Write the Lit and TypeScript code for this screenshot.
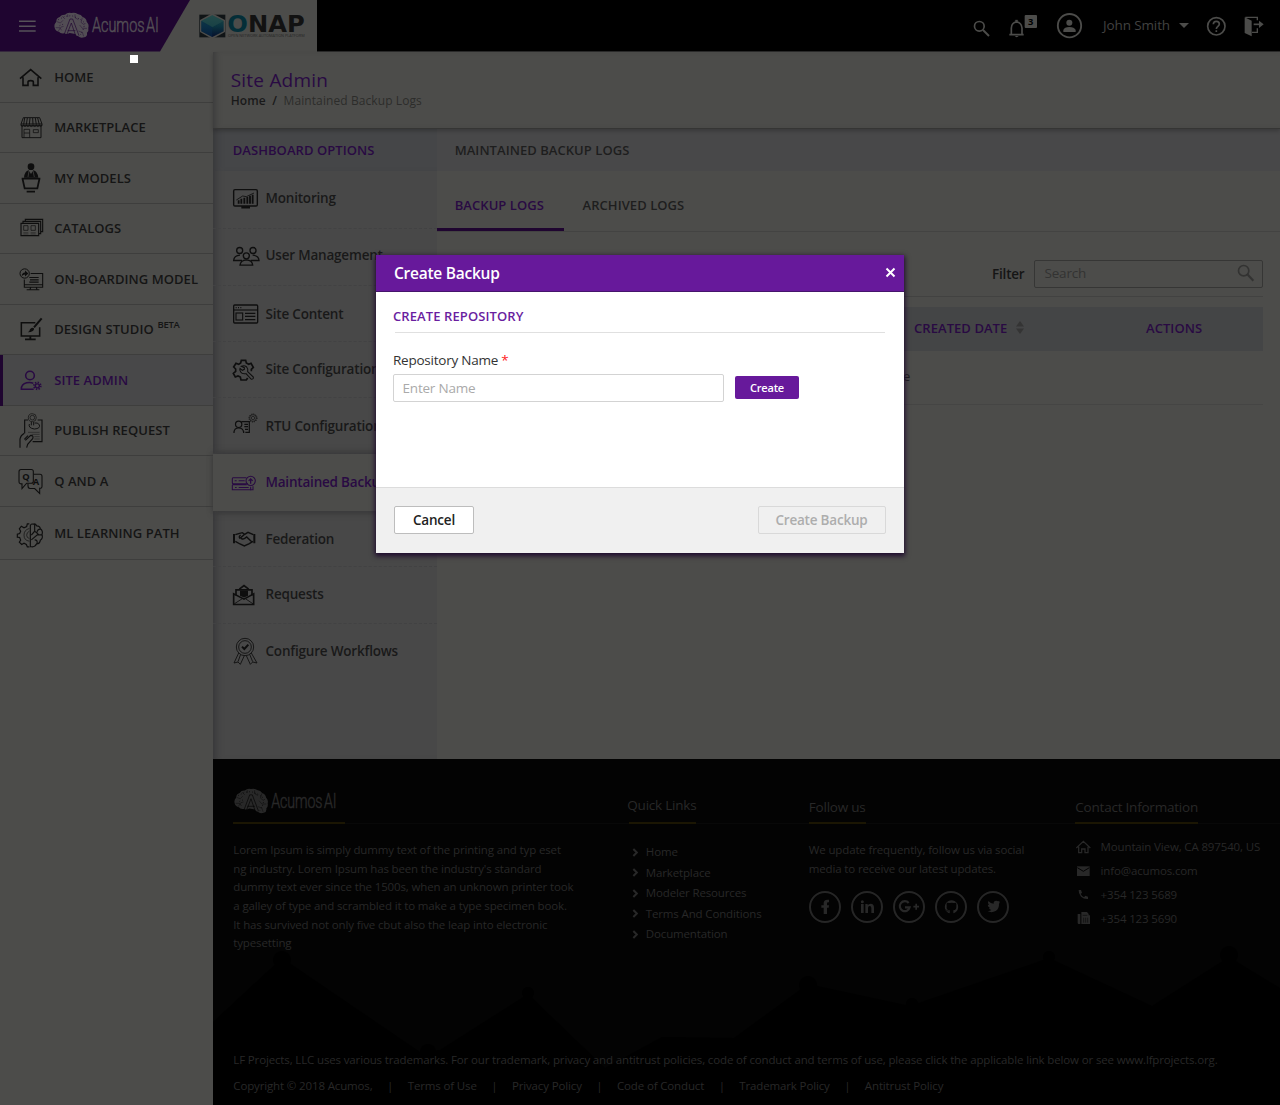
import { LitElement, html, svg, css, nothing } from "lit";
import { customElement, property } from "lit/decorators.js";

const gear = (cx: number, cy: number, r: number, w = 3) => svg`
  <circle cx=${cx} cy=${cy} r=${r} stroke-width=${w}></circle>
  <circle cx=${cx} cy=${cy} r=${r + w} stroke-width=${w * 1.3} pathLength="16" stroke-dasharray="1 1"></circle>`;

const house = svg`<path d="M60 86 92 59 124 86M69 82V106H84V96Q84 92 92 92T100 96V106H114V82" stroke-width="4.800"/>`;

/* Icons are drawn on a grid of three units per pixel: [viewBox, content]. */
const icons: Record<string, [string, unknown]> = {
  home: ["45 30 90 108", house],
  market: ["45 180 90 108", svg`<g stroke-width="2.800"><path d="M70 203H119L126 222V227H63V222ZM66 229V263H123V229M63 222H126M74 204 71 224M82 204 79 224M90 204 88 224M98 204 99 224M106 204 109 224M113 204 118 224"/>
    <path d="M63 227Q67 232 71 227 75 232 79 227 84 232 88 227 94 232 99 227 104 232 109 227 113 232 118 227 122 232 126 227"/>
    <path d="M72 262V238H89V262M72 249H89M100 239H115V248H100Z" opacity=".8"/></g>`],
  models: ["45 331 90 108", svg`<circle cx="93" cy="348" r="10" fill="currentColor" stroke="none"/>
    <path d="M72 381Q74 361 86 359L93 370 100 359Q112 361 115 381Z" fill="currentColor" stroke="none"/>
    <path d="M87 361 84 379M99 361 103 379" stroke="#4c4c4a" stroke-width="2"/>
    <path d="M65 384H121M68 386 74 413H112L118 386M80 423H105" stroke-width="5.400"/>`],
  catalogs: ["45 483 90 108", svg`<g stroke-width="3.400"><path d="M63 520H116V557H63ZM69 519V514H122V551H117M76 513V508H128V545H123"/>
    <path d="M71 527H84V541H71ZM93 527H106V541H93Z" stroke-width="2.6" opacity=".8"/><path d="M70 548H85M92 548H107M70 552H85M92 552H107" stroke-width="1.6" opacity=".7"/></g>`],
  onboard: ["45 634.5 90 108", svg`<circle cx="74" cy="669" r="14" stroke-width="3"/><path d="M65 677Q66 666 75 666V660L85 669 75 678V672Q69 672 65 677Z" fill="currentColor" stroke="none"/>
    <path d="M92 669H128V710H73V687M73 703H128M92 711 90 717M109 711 111 717M80 718H118" stroke-width="3.200"/><path d="M88 681H116M90 688H116M88 695H116" stroke-width="3.400"/>`],
  design: ["45 36 90 108", svg`<path d="M106 68H64V108H119V82" stroke-width="4.600"/><path d="M125 55 102 82" stroke-width="6"/><path d="M83 97Q89 95 90 88 95 80 102 85 104 96 83 97Z" fill="currentColor" stroke="none"/><path d="M91 109V118M75 118H107" stroke-width="5.500"/>`],
  admin: ["45 187.5 90 108", svg`<circle cx="90" cy="225" r="13" stroke-width="4.6"/><path d="M100 248Q90 245 80 247 64 251 64 266H101" stroke-width="4.6"/>${gear(112, 256, 6, 4.2)}`],
  publish: ["45 339 90 108", svg`<g stroke-width="3.400"><path d="M74 400V360H84M113 360H126V425H98"/><circle cx="97" cy="353" r="12" stroke-width="2"/><circle cx="97" cy="353" r="7" stroke-width="2"/>
    <path d="M94 366V376M101 366V376M88 372Q84 384 103 387 122 386 118 374 112 367 104 369" stroke-width="2.8"/><path d="M84 397H119M95 403H119M103 410H119M103 417H119" stroke-width="1.8" opacity=".7"/>
    <path d="M60 443V417Q62 406 73 400M80 443 83 433 98 416Q102 406 92 406L76 421M84 407 73 418"/></g>`],
  qa: ["45 490.5 90 108", svg`<g stroke-width="3.200"><path d="M63 507H94Q100 507 100 513V542Q100 548 94 548H80L66 564V550Q57 551 57 543V514Q57 507 63 507Z"/><path d="M101 521H120Q126 521 126 527V557Q126 564 119 563V579L104 564H90Q84 564 84 556V550"/></g>
    <text x="67" y="538" font-size="28" font-weight="700">Q<tspan x="98" y="554">A</tspan></text>`],
  ml: ["45 646.5 90 108", svg`<g stroke-width="3.500"><path d="M88 670H82L80 678 72 682 64 677 58 685 62 692 59 699 52 701V710L59 711 62 719 58 725 65 732 72 728 79 732 82 739H88"/><path d="M88 684Q72 688 72 704T88 722" stroke-width="2"/><path d="M88 692Q80 696 80 704T88 714" stroke-width="2"/>
    <path d="M91 740V675Q93 669 99 671 106 668 110 676 120 676 121 685 130 692 126 702 130 714 121 719 120 730 110 730 104 742 91 738M104 672V692L94 704M104 692 118 704M121 686Q112 686 111 696M126 703H112L94 718M111 730Q114 718 104 718"/></g>`],
  monitor: ["57 375 90 90", svg`<rect x="65" y="389" width="71" height="49" rx="4" stroke-width="4.200"/><path d="M88 442H114" stroke-width="7"/><path d="M80 431V421M88 431V416M97 431V413M106 431V411M114 431V407M122 431V404" stroke-width="5.500"/><path d="M73 420 92 408 103 410 126 399" stroke-width="2.600"/>`],
  users: ["57 547.5 90 90", svg`<g stroke-width="4"><circle cx="83" cy="573" r="9"/><circle cx="123" cy="573" r="9"/><circle cx="103" cy="589" r="9"/><path d="M90 603H65Q66 588 84 587M116 603H141Q140 588 122 587M84 617H122Q121 602 103 601 86 602 84 617Z"/></g>`],
  content: ["57 717 90 90", svg`<rect x="65" y="735" width="72" height="54" rx="3" stroke-width="4"/><path d="M65 750H137" stroke-width="3.400"/><path d="M71 743H74M78 743H81M85 743H88" stroke-width="3.400"/><rect x="72" y="759" width="20" height="21" stroke-width="3.400"/><path d="M99 760H130M99 769H130M99 779H130" stroke-width="4"/>`],
  config: ["57 105 90 90", svg`<path d="M107 174 103 180H87L85 171 78 168 70 171 64 160 71 154V147L65 141 72 130 80 133 86 129 88 121H101L103 129 110 133 117 130 124 142 118 148V154" stroke-width="5"/>
    <path d="M88 139Q97 135 104 141 110 148 107 155L124 171Q125 178 118 178L102 161Q90 163 86 156 82 150 84 145L91 151 97 148 97 143Z" stroke-width="3.200"/>`],
  rtu: ["57 273 90 90", svg`<g stroke-width="3.600"><circle cx="80" cy="313" r="9.5"/><path d="M66 338Q66 324 80 324T95 338M66 334V339M95 334V339"/><path d="M88 305H112V337H100M97 313H108M97 320H108M99 328H108"/></g><circle cx="123" cy="294" r="12" stroke-width="3" pathLength="24" stroke-dasharray="1 1"/><circle cx="123" cy="294" r="10" stroke-width="1.800"/><circle cx="123" cy="294" r="5" stroke-width="1.8"/>`],
  backup: ["57 442.5 90 90", svg`<g stroke-width="3.2"><path d="M103 472H63Q61 472 61 475V487Q61 490 64 490H108M64 491Q61 492 61 495V508H123V497M61 493H104M68 481H74M80 481H98M69 501H74M80 501H110"/><circle cx="116" cy="481" r="14"/><path d="M116 499V509"/></g><path d="M116 490V475M110 481 116 475 122 481" stroke-width="3.8"/>`],
  federation: ["57 612 90 90", svg`<g stroke-width="4.200"><path d="M66 642V670M127 642V670" stroke-width="6"/><path d="M70 644 83 640 91 638 98 643M124 644 108 637 98 643 86 653Q90 660 98 655L104 651 119 665M70 664 84 672 97 678 112 671 123 664M84 656Q79 649 86 645"/></g>`],
  requests: ["57 781.5 90 90", svg`<path d="M72 828V811H120V828M82 809 96 798 110 809" stroke-width="5"/><path d="M84 813H108V829L96 834 84 829Z" fill="currentColor" stroke="none"/><path d="M65 823V855H125V823L96 839Z" stroke-width="5"/><path d="M67 853 90 838M123 853 101 838" stroke-width="2.6"/>`],
  workflows: ["57 951 90 90", svg`<g stroke-width="2.6"><circle cx="99" cy="981" r="26"/><circle cx="99" cy="981" r="19"/><path d="M80 999 66 1029 78 1026 85 1033 97 1007M118 999 135 1029 122 1026 115 1033 103 1007M86 1003 78 1025M113 1003 122 1025"/></g><path d="M90 980 97 987 109 974" stroke-width="6"/>`],
  menu: ["54 57 54 42", svg`<path d="M57 64H107M57 78.500H107M57 93H107" stroke-width="4.400"/>`],
  search: ["36 57 57 57", svg`<circle cx="58" cy="79" r="14.500" stroke-width="5"/><path d="M69 90 87 108" stroke-width="6"/>`],
  bell: ["144 42 90 75", svg`<path d="M148 104H191M154 102V84Q155 67 170 66 184 67 186 84V102" stroke-width="5"/><path d="M166 66V60H173V66Z" fill="currentColor"/><path d="M164 108H176Q170 115 164 108Z" fill="currentColor" stroke="none"/><rect x="194" y="45" width="37" height="39" rx="3" fill="currentColor" stroke="none"/><text x="204" y="75" font-size="28" font-weight="700" class="neg">3</text>`],
  user: ["288 36 81 81", svg`<circle cx="328.500" cy="77" r="35" stroke-width="5.600"/><circle cx="328" cy="68" r="9" fill="currentColor" stroke="none"/><path d="M310 96V90Q313 81 328 81T347 90V96Z" fill="currentColor" stroke="none"/>`],
  help: ["738 48 63 63", svg`<circle cx="769" cy="79" r="26" stroke-width="5"/><path d="M760 73Q760 64 769 64T778 72C778 79 769 79 769 87M769 91V96" stroke-width="5"/>`],
  exit: ["849 48 66 66", svg`<path d="M854 52 875 62V109L854 99Z" fill="currentColor" stroke="none"/><path d="M856 52H892V61M892 85V97H876" stroke-width="4"/><path d="M881 73H903" stroke-width="5"/><path d="M897 62 911 73 897 84Z" fill="currentColor" stroke="none"/>`],
  find: ["1011 72 54 54", svg`<circle cx="1031" cy="92" r="15.500" stroke-width="5"/><path d="M1042 103 1060 122" stroke-width="6.500"/>`],
  chev: ["95 204 21 27", svg`<path d="M99 207 109.500 217.500 99 228" stroke-width="6"/>`],
  fb: ["645 351 60 60", svg`<path d="M687 359H682Q671 359 671 370V376H664V383H671V402H681V383H686L687 376H681V371Q681 367 684 367H687Z" fill="currentColor" stroke="none"/>`],
  li: ["771 351 60 60", svg`<path d="M783 372H791V399H783ZM796 372H803V376Q806 371 812 371 822 371 822 383V399H814V384Q814 378 809 378 804 378 804 384V399H796Z" fill="currentColor" stroke="none"/><circle cx="787" cy="365" r="4.500" fill="currentColor" stroke="none"/>`],
  gp: ["897 351 60 60", svg`<path d="M926 369A15 15 0 1 0 929 382H915" stroke-width="6.500"/><path d="M940 380H957M948.500 371V389" stroke-width="5"/>`],
  gh: ["1023 351 60 60", svg`<path d="M1049 400V391Q1038 391 1040 378 1039 371 1041 368L1048 369Q1055 367 1062 369L1068 368Q1070 372 1069 378 1070 391 1060 391V400A20 20 0 1 0 1049 400Z" fill="currentColor" stroke="none" /><path d="M1047 393Q1039 394 1037 388" stroke-width="2" stroke="#030303"/>`],
  tw: ["1149 351 60 60", svg`<path d="M1162 393Q1170 394 1174 390 1168 388 1167 384H1170Q1163 380 1163 374L1167 375Q1162 369 1165 363 1172 371 1181 371 1180 362 1189 362 1192 362 1194 364L1199 363 1197 367 1200 367 1197 371Q1198 385 1187 393 1175 400 1162 393Z" fill="currentColor" stroke="none"/>`],
  chome: ["225 177 51 48", svg`<path d="M229 204 250 184 271 204M236 200V218H245V207H255V218H264V200" stroke-width="3.800"/>`],
  mail: ["225 249 51 48", svg`<path d="M231 259H269V288H231Z" fill="currentColor" stroke="none"/><path d="M232 263 250 274 268 263" stroke="#030303" stroke-width="3"/>`],
  phone: ["225 321 51 48", svg`<path d="M236 330H243L246 338 242 342Q246 349 252 352L256 347 264 350V357Q252 358 243 350 235 341 236 330Z" fill="currentColor" stroke="none"/>`],
  fax: ["225 393 51 48", svg`<path d="M233 405H241V435H236Q233 435 233 431ZM244 399H261L266 405V409H270V435H244Z" fill="currentColor" stroke="none"/><path d="M248 409H262M251 416V431M257 416V431M263 416V431" stroke="#030303" stroke-width="1.500"/>`],
};

const icon = (name: string) => {
  const [box, body] = icons[name];
  const [, , w, h] = box.split(" ").map(Number);
  return html`<svg class="icon" width=${w / 3} height=${h / 3} viewBox=${box}>${body}</svg>`;
};

@customElement("acumos-logo")
class AcumosLogo extends LitElement {
  @property({ type: Number }) width = 106;
  static styles = css`
    :host { display: block; }
    svg { display: block; overflow: visible; }
    .word { font-family: Roboto, "Open Sans", sans-serif; font-weight: 300; fill: currentColor; stroke: currentColor; stroke-width: 1.6; }
    .cut { fill: none; stroke: var(--cut, #1f0530); }
  `;
  render() {
    return html`<svg width=${this.width} height=${(this.width * 84) / 318} viewBox="160 32 318 84">
      <path fill="currentColor" d="M165 82Q162 72 170 64 169 54 180 50 186 42 196 43 204 35 215 38 226 35 234 41 245 42 249 50 260 54 261 64 269 72 266 82 268 92 262 97 264 108 254 111 242 115 236 108 228 107 227 101L210 98Q200 103 194 99 182 101 178 94 167 92 165 82Z"/>
      <g class="cut" stroke-width="2"><path d="M193 104 211 56H219L238 106M201 104 215 68 228 106M204 91H227"/>
        <path stroke-width="1.200" d="M172 64 182 68 190 60M188 48 196 56M226 42V52L236 58M248 52 244 66 254 74M168 82H180L186 90M240 74 248 84 262 84M236 92 248 96 252 108M204 42V50M176 92 184 80 192 78"/>
        <path stroke-width="3" stroke-dasharray="2 7" d="M176 58 196 48 216 46 240 56 256 68 250 90 242 104M180 76 194 70"/></g>
      <text class="word" transform="translate(277 96) scale(.733 1)" x="0" y="0" font-size="59">Acumos<tspan dx="6">AI</tspan></text>
    </svg>`;
  }
}

@customElement("backup-dialog")
class BackupDialog extends LitElement {
  static styles = css`
    :host { display: flex; flex-direction: column; width: 528.5px; height: 298px; background: #fff; font-family: "Open Sans", sans-serif;
      box-shadow: 0 2px 5px 1px #1f0a2e; color: #333; }
    .head { height: 37px; flex: none; box-sizing: border-box; background: #67199b; border-bottom: 1px solid #45156b; display: flex; align-items: center; justify-content: space-between; padding: 0 8.500px 1px 18.5px; color: #fff; }
    .title { font-size: 15.500px; letter-spacing: -.25px; font-weight: 600; padding-top: 1px; }
    .body { flex: 1; padding: 13px 19px 0 17.500px; }
    .sub { font-size: 13px; font-weight: 600; line-height: 22px; color: #6a1ea0; letter-spacing: .1px; }
    .rule { height: 1px; background: #e0e0e0; margin: 4.500px 0 0 2px; }
    .label { font-size: 13.500px; letter-spacing: -.24px; line-height: 22px; margin-top: 16.400px; }
    .req { color: #f22; }
    .row { display: flex; align-items: center; gap: 11.500px; margin-top: 3.600px; }
    .input { box-sizing: border-box; width: 330.500px; height: 27.500px; border: 1px solid #d3d3d3; border-radius: 2px; display: flex; align-items: center; padding-left: 8.500px; font-size: 13.500px; letter-spacing: -.2px; color: #aaa; }
    .btn { box-sizing: border-box; display: flex; align-items: center; justify-content: center; border-radius: 2px; height: 28px; font-size: 13.500px; letter-spacing: -.2px; font-weight: 600; white-space: nowrap; }
    .create { width: 64px; height: 22.500px; margin-top: -1.500px; font-size: 11px; letter-spacing: -.2px; color: #fff; background: #67199b; }
    .foot { height: 66px; box-sizing: border-box; border-top: 1px solid #dcdcdc; background: #f0f0f0; display: flex; align-items: center; justify-content: space-between; padding: 0 18.500px 1.500px; }
    .cancel { width: 80px; background: #fff; border: 1px solid #bdbdbd; color: #222; }
    .save { width: 128px; border: 1px solid #d9d9d9; color: #adadad; }
  `;
  render() {
    return html`
      <div class="head"><span class="title">Create Backup</span>
        <svg width="11" height="11" viewBox="0 0 11 11"><path d="M1.500 1.500 9.500 9.500M9.500 1.500 1.500 9.500" stroke="#fff" stroke-width="2"/></svg></div>
      <div class="body">
        <div class="sub">CREATE REPOSITORY</div><div class="rule"></div>
        <div class="label">Repository Name <span class="req">*</span></div>
        <div class="row"><div class="input">Enter Name</div><div class="btn create">Create</div></div>
      </div>
      <div class="foot"><div class="btn cancel">Cancel</div><div class="btn save">Create Backup</div></div>`;
  }
}

const nav: [string, string, number][] = [
  ["home", "HOME", 51], ["market", "MARKETPLACE", 50], ["models", "MY MODELS", 51], ["catalogs", "CATALOGS", 50],
  ["onboard", "ON-BOARDING MODEL", 51], ["design", "DESIGN STUDIO", 50], ["admin", "SITE ADMIN", 51],
  ["publish", "PUBLISH REQUEST", 50], ["qa", "Q AND A", 51], ["ml", "ML LEARNING PATH", 53],
];
/* [icon, label, row height, upward nudge of the label] */
const options: [string, string, number, number][] = [
  ["monitor", "Monitoring", 58, 4], ["users", "User Management", 57, 4], ["content", "Site Content", 56, 0], ["config", "Site Configuration", 56, 1],
  ["rtu", "RTU Configuration", 56, 0], ["backup", "Maintained Backup", 57, 1], ["federation", "Federation", 56, 0],
  ["requests", "Requests", 57, 2], ["workflows", "Configure Workflows", 56, 2],
];
const lorem = ["Lorem Ipsum is simply dummy text of the printing and typ eset", "ng industry. Lorem Ipsum has been the industry's standard",
  "dummy text ever since the 1500s, when an unknown printer took", "a galley of type and scrambled it to make a type specimen book.",
  "It has survived not only five cbut also the leap into electronic", "typesetting"];
const legal = ["Copyright © 2018 Acumos,", "Terms of Use", "Privacy Policy", "Code of Conduct", "Trademark Policy", "Antitrust Policy"];

@customElement("app-root")
class AppRoot extends LitElement {
  static styles = css`
    :host { display: block; position: relative; width: 1280px; height: 1105px; overflow: hidden; background: #4c4c4a; font-family: "Open Sans", sans-serif; color: #191919; white-space: nowrap; }
    .icon { display: block; flex: none; fill: none; stroke: currentColor; overflow: visible; }
    .icon text { fill: currentColor; stroke: none; }
    .icon text.neg { fill: #000; }
    .top { height: 52px; box-sizing: border-box; background: #000; border-bottom: 1px solid #2b2b2a; display: flex; }
    .brand { width: 316.500px; height: 52px; background: #4c4c4a; display: flex; }
    .purple { width: 190px; height: 51.500px; box-sizing: border-box; background: #1f0530; clip-path: polygon(0 0, 100% 0, 160px 100%, 0 100%); display: flex; padding: 10.600px 0 0 18px; color: #524d54; }
    .purple .icon { margin: 8.400px 17.300px 0 0; color: #565258; }
    .onap { margin: 13px 0 0 8px; display: block; overflow: visible; }
    .onap .w { font-family: "DejaVu Sans", sans-serif; font-weight: 700; }
    .tools { flex: 1; display: flex; align-items: flex-start; color: #4c4c4a; padding-left: 655.500px; }
    .tools > * { flex: none; }
    .t-search { margin-top: 19px; }
    .t-bell { margin: 14px 0 0 17px; }
    .t-user { margin: 12px 0 0 18px; }
    .t-help { margin: 16px 0 0 17px; }
    .t-exit { margin: 16px 0 0 16px; }
    .name { font-size: 13.500px; letter-spacing: -.12px; line-height: 20px; color: #424241; width: 76px; margin: 15px 0 0 20px; }
    .caret { width: 0; height: 0; border: 5px solid transparent; border-top-color: #4c4c4a; border-bottom: 0; margin-top: 23px; }
    .main { display: flex; height: 1053px; }
    .side { width: 213px; flex: none; }
    .item { box-sizing: border-box; display: flex; align-items: center; padding-left: 15px; gap: 9.200px; box-shadow: inset 0 -1px #3e3e3d; font-size: 13px; letter-spacing: .06px; font-weight: 600; color: #151515; }
    .item > span { padding-bottom: 2px; }
    .item > .icon, .opt > .icon { color: #0e0e0e; }
    .item.on { background: #484849; color: #290a43; box-shadow: inset 3px 0 #1f0530, inset 0 -1px #3e3e3d; }
    .item.on > .icon, .opt.on > .icon { color: #290a43; }
    .item > .beta { font-size: 9.500px; margin: -9px 0 0 -5.500px; letter-spacing: -.3px; }
    .page { flex: 1; display: flex; flex-direction: column; min-width: 0; }
    .crumbs { height: 77px; flex: none; margin-bottom: -1px; box-sizing: border-box; border-bottom: 1.500px solid #353534; box-shadow: 0 2px 4px rgba(0,0,0,.22), inset 6px 0 6px -4px rgba(40,40,44,.5); padding: 16px 0 0 17.700px; position: relative; }
    .h1 { font-size: 19px; letter-spacing: .22px; line-height: 24px; color: #290a43; }
    .path { font-size: 12px; letter-spacing: .09px; font-weight: 600; line-height: 18px; display: flex; gap: 6.500px; }
    .path .cur { font-weight: 400; color: #2c2c2b; }
    .work { height: 631px; display: flex; }
    .panel { width: 224px; flex: none; background: #484848; box-shadow: inset 8px 0 7px -5px #38383a; }
    .ph { height: 43px; background: #454648; display: flex; align-items: center; padding-left: 19.700px; font-size: 13px; letter-spacing: .06px; font-weight: 600; color: #290a43; box-shadow: inset 8px 0 7px -5px #38383a; }
    .opt { box-sizing: border-box; display: flex; align-items: center; gap: 4.500px; padding-left: 18px; border-bottom: 1px dashed #424243; font-size: 13.500px; letter-spacing: -.2px; font-weight: 600; }
    .opt:last-child { border: 0; }
    .opt.on { background: #4c4c4a; color: #290a43; border-bottom: 0; box-shadow: 0 -3px 5px #3b3b3c, 0 3px 5px #3b3b3c; position: relative; }
    .data { flex: 1; min-width: 0; }
    .dh { height: 43px; background: #484849; display: flex; align-items: center; padding-left: 17.700px; font-size: 13px; letter-spacing: .05px; font-weight: 600; color: #1e1e1e; }
    .tabs { height: 61px; box-sizing: border-box; border-bottom: 1px solid #434342; display: flex; font-size: 13px; letter-spacing: .06px; font-weight: 600; }
    .tab { box-sizing: border-box; height: 60px; padding: 8px 19px 0 18.500px; display: flex; align-items: center; color: #1e1e1e; }
    .tab.on { width: 127px; padding: 11px 0 0 17.700px; border-bottom: 3px solid #1f0530; color: #290a43; }
    .filter { height: 65px; box-sizing: border-box; margin: 0 17px 0 18px; border-bottom: 1px solid #424241; display: flex; justify-content: flex-end; gap: 9.500px; padding-top: 28px; font-size: 13.500px; letter-spacing: -.2px; }
    .fl { font-weight: 600; line-height: 28px; color: #151515; }
    .box { box-sizing: border-box; width: 229px; height: 28px; border: 1px solid #363635; border-radius: 2px; display: flex; align-items: center; justify-content: space-between; padding: 0 7px 2px 9.500px; color: #333332; }
    .th { box-sizing: border-box; margin: 9.500px 17px 0 18px; height: 44px; padding-bottom: 2px; background: #444546; display: grid; grid-template-columns: 459px 232px 1fr; align-items: center; font-size: 13px; letter-spacing: .06px; font-weight: 600; color: #290a43; }
    .th div { display: flex; align-items: center; gap: 8.500px; }
    .td { margin: 0 17px 0 18px; height: 54px; box-sizing: border-box; padding-bottom: 2px; border-bottom: 1px solid #454544; display: grid; grid-template-columns: 455.300px; justify-items: end; align-items: center; font-size: 13px; color: #1e1e1e; }
    .footer { flex: 1; background: #030303; position: relative; color: #282828; font-size: 11.500px; letter-spacing: -.142px; overflow: hidden; }
    .hills { position: absolute; left: 0; top: 0; }
    .fgrid { position: relative; display: grid; grid-template-columns: 394px 181.500px 266.500px 1fr; padding-left: 20.300px; }
    .fh { height: 64.500px; box-sizing: border-box; border-bottom: 1.500px solid #080808; display: flex; align-items: flex-end; font-size: 13.500px; letter-spacing: -.22px; margin-right: -1px; }
    .fh span, .fh acumos-logo { display: block; line-height: 22px; margin-bottom: -1.500px; border-bottom: 2px solid #1b1603; padding-bottom: 4px; }
    .fh acumos-logo { padding: 0 0 7.500px 0; width: 112px; --cut: #030303; }
    .fh .ql { padding-bottom: 6px; border-image: linear-gradient(90deg, transparent 3px, #1b1603 3px) 1; }
    .fb { padding-top: 17.500px; line-height: 18.670px; }
    .links { padding: 18.500px 0 0 4.500px; line-height: 20.500px; }
    .links div, .contact div { display: flex; align-items: center; }
    .links div { gap: 7px; }
    .soc { display: flex; gap: 9.500px; margin-top: 12.500px; }
    .soc div { box-sizing: border-box; width: 32.500px; height: 32.500px; border: 2px solid #262626; border-radius: 50%; display: flex; align-items: center; justify-content: center; }
    .contact { padding-top: 11.300px; }
    .contact div { gap: 8.300px; height: 23.900px; }
    .tm { position: absolute; left: 20.300px; top: 292px; line-height: 18px; }
    .legal { position: absolute; left: 20.300px; top: 318px; line-height: 18px; display: flex; gap: 14.500px; }
    .dot { position: absolute; left: 130px; top: 55px; width: 8px; height: 8px; background: #fff; }
    backup-dialog { position: absolute; left: 375.500px; top: 255px; }
  `;
  render() {
    return html`
      <div class="top">
        <div class="brand">
          <div class="purple">${icon("menu")}<acumos-logo></acumos-logo></div>
          <svg class="onap" width="108" height="26" viewBox="594 39 324 78">
            <defs><linearGradient id="hx" x1="0" y1="0" x2="0" y2="1"><stop offset="0" stop-color="#1d4446"/><stop offset=".5" stop-color="#0b3440"/><stop offset="1" stop-color="#050f2c"/></linearGradient></defs>
            <path d="M598 44H676V112H598Z" fill="#101416"/><path d="M637 40 675 60V96L637 117 600 96V60Z" fill="#4c4c4a"/>
            <path d="M637 46 671 63V94L637 111 604 94V63Z" fill="url(#hx)"/><path d="M637 46 671 63 637 82 604 63Z" fill="#27504b" opacity=".5"/><path d="M637 82V111L604 94V63Z" fill="#082a4a" opacity=".5"/>
            <text class="w" x="682" y="96" font-size="67" textLength="232" lengthAdjust="spacingAndGlyphs" fill="#042e38">O<tspan fill="#121212">NAP</tspan></text>
            <text x="684" y="111" font-size="9" textLength="230" lengthAdjust="spacingAndGlyphs" fill="#262626">OPEN NETWORK AUTOMATION PLATFORM</text>
          </svg>
        </div>
        <div class="tools">
          <div class="t-search">${icon("search")}</div>
          <div class="t-bell">${icon("bell")}</div>
          <div class="t-user">${icon("user")}</div>
          <span class="name">John Smith</span>
          <i class="caret"></i>
          <div class="t-help">${icon("help")}</div>
          <div class="t-exit">${icon("exit")}</div>
        </div>
      </div>
      <div class="main">
        <div class="side">
          ${nav.map(([i, t, h]) => html`<div class="item ${i === "admin" ? "on" : ""}" style="height:${h}px">${icon(i)}<span>${t}</span>${i === "design" ? html`<span class="beta">BETA</span>` : nothing}</div>`)}
        </div>
        <div class="page">
          <div class="crumbs"><div class="h1">Site Admin</div><div class="path"><span>Home</span><span>/</span><span class="cur">Maintained Backup Logs</span></div></div>
          <div class="work">
            <div class="panel"><div class="ph">DASHBOARD OPTIONS</div>
              ${options.map(([i, t, h, up]) => html`<div class="opt ${i === "backup" ? "on" : ""}" style="height:${h}px">${icon(i)}<span style="padding-bottom:${up}px">${t}</span></div>`)}
            </div>
            <div class="data">
              <div class="dh">MAINTAINED BACKUP LOGS</div>
              <div class="tabs"><div class="tab on">BACKUP LOGS</div><div class="tab">ARCHIVED LOGS</div></div>
              <div class="filter"><span class="fl">Filter</span><div class="box">Search${icon("find")}</div></div>
              <div class="th"><div></div><div>CREATED DATE<svg width="8" height="13" viewBox="0 0 8 13"><path d="M0 5.500 4 0 8 5.500ZM0 7.500 4 13 8 7.500Z" fill="#343434"/></svg></div><div>ACTIONS</div></div>
              <div class="td"><span>e</span></div>
            </div>
          </div>
          <div class="footer">
            <svg class="hills" width="1067" height="346" viewBox="213 759 1067 346"><g fill="#000"><path d="M213 1022 282 958 420 1052 440 1050 528 994 605 1068 662 1037 734 1038 808 984 910 1006 1049 958 1152 1006 1229 957 1280 988V1105H213Z"/><circle cx="282" cy="960" r="9"/><circle cx="528" cy="993" r="6"/><circle cx="808" cy="985" r="9"/><circle cx="1049" cy="957" r="6"/><circle cx="1229" cy="955" r="9"/><circle cx="344" cy="1008" r="6"/><circle cx="428" cy="1052" r="8"/><circle cx="912" cy="1004" r="6"/></g></svg>
            <div class="fgrid">
              <div class="fh"><acumos-logo .width=${104}></acumos-logo></div>
              <div class="fh"><span class="ql">Quick Links</span></div>
              <div class="fh"><span>Follow us</span></div>
              <div class="fh"><span>Contact Information</span></div>
              <div class="fb">${lorem.map((l) => html`<div>${l}</div>`)}</div>
              <div class="links">${["Home", "Marketplace", "Modeler Resources", "Terms And Conditions", "Documentation"].map((l) => html`<div>${icon("chev")}<span>${l}</span></div>`)}</div>
              <div class="fb"><div>We update frequently, follow us via social</div><div>media to receive our latest updates.</div>
                <div class="soc">${["fb", "li", "gp", "gh", "tw"].map((s) => html`<div>${icon(s)}</div>`)}</div></div>
              <div class="contact"><div>${icon("chome")}Mountain View, CA 897540, US</div><div>${icon("mail")}info@acumos.com</div><div>${icon("phone")}+354 123 5689</div><div>${icon("fax")}+354 123 5690</div></div>
            </div>
            <div class="tm">LF Projects, LLC uses various trademarks. For our trademark, privacy and antitrust policies, code of conduct and terms of use, please click the applicable link below or see www.lfprojects.org.</div>
            <div class="legal">${legal.map((l, i) => html`${i ? html`<span>|</span>` : nothing}<span>${l}</span>`)}</div>
          </div>
        </div>
      </div>
      <div class="dot"></div>
      <backup-dialog></backup-dialog>`;
  }
}
